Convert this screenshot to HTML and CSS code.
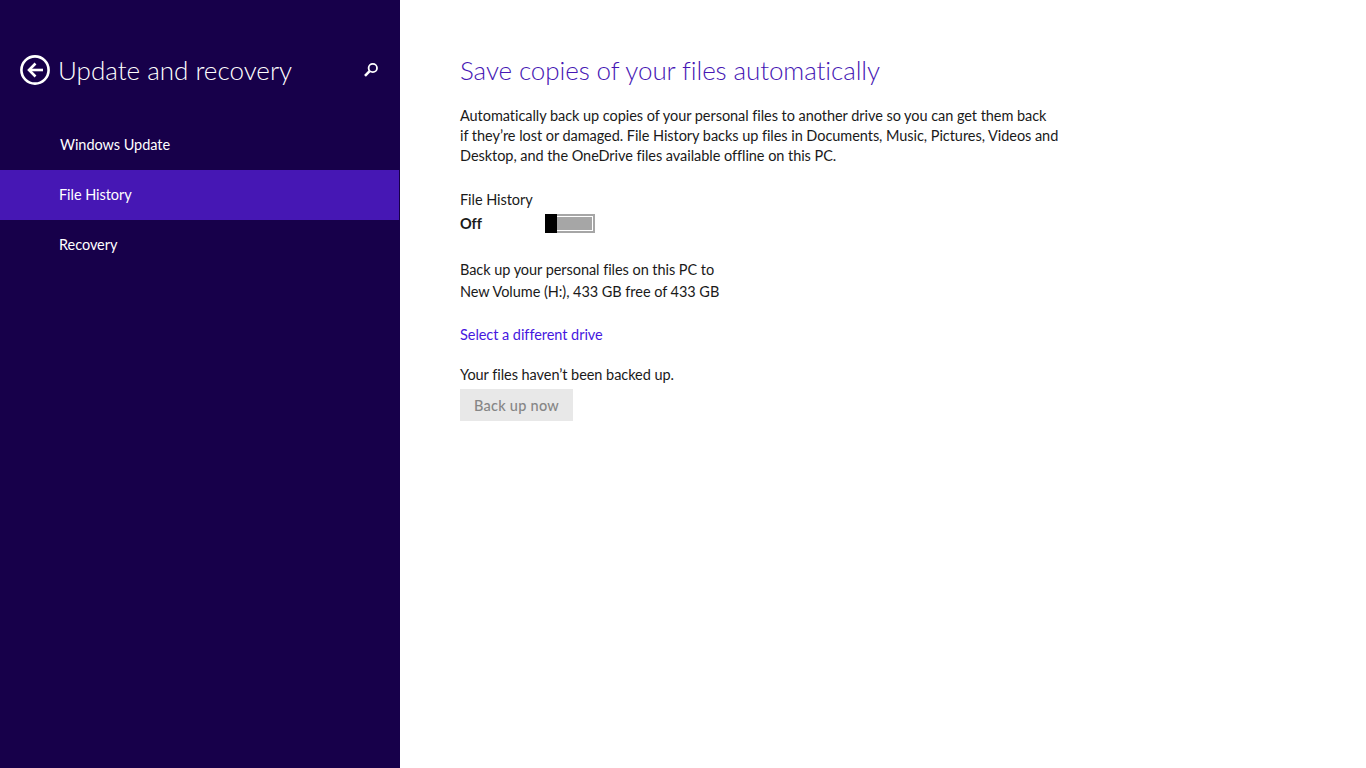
FILE: index.html
```html
<!DOCTYPE html>
<html lang="en">
<head>
    <meta charset="UTF-8">
    <meta name="viewport" content="width=device-width, initial-scale=1.0">
    <title>Update and recovery</title>
    <link rel="stylesheet" href="styles.css">
</head>
<body>
    <div class="sidebar">
        <div class="side-head">
            <svg class="back-icon" viewBox="0 0 30 30">
                <circle cx="15" cy="15" r="13.6" />
                <line x1="9" y1="15" x2="23" y2="15" />
                <polyline points="15.5,8.5 9,15 15.5,21.5" />
            </svg>
            <h1 class="side-title">Update and recovery</h1>
            <svg class="search-icon" viewBox="0 0 16 16">
                <circle cx="9.8" cy="6" r="4.2" />
                <line class="search-handle" x1="6.6" y1="9.2" x2="2" y2="13.8" />
            </svg>
        </div>
        <ul class="side-nav">
            <li class="nav-first">Windows Update</li>
            <li class="active">File History</li>
            <li>Recovery</li>
        </ul>
    </div>
    <div class="content">
        <h2 class="page-title">Save copies of your files automatically</h2>
        <p class="intro">Automatically back up copies of your personal files to another drive so you can get them back<br>if they’re lost or damaged. File History backs up files in Documents, Music, Pictures, Videos and<br>Desktop, and the OneDrive files available offline on this PC.</p>
        <div class="toggle-label">File History</div>
        <div class="toggle-row">
            <span class="toggle-state">Off</span>
            <div class="toggle"><div class="toggle-thumb"></div><div class="toggle-fill"></div></div>
        </div>
        <p class="drive-info">Back up your personal files on this PC to<br>New Volume (H:), 433 GB free of 433 GB</p>
        <a class="drive-link" href="#">Select a different drive</a>
        <p class="status">Your files haven’t been backed up.</p>
        <button class="backup-btn" disabled>Back up now</button>
    </div>
</body>
</html>
```

FILE: styles.css
```css
body {
    display: flex;
    height: 100vh;
    margin: 0;
    overflow: hidden;
    background-color: #fff;
    color: #1a1a1a;
    font-family: "Lato", "Noto Sans", sans-serif;
    font-size: 14.5px;
    letter-spacing: -0.05px;
}

.sidebar {
    width: 400px;
    flex-shrink: 0;
    background-color: #17004a;
    color: #fff;
}

.side-head {
    display: flex;
    align-items: center;
    height: 30px;
    padding: 55px 21px 0 20px;
}

.back-icon {
    width: 30px;
    height: 30px;
    fill: none;
    stroke: #fff;
    stroke-width: 2.6;
}

.side-title {
    flex: 1;
    margin: 0 0 0 8px;
    font-size: 26px;
    font-weight: 300;
    letter-spacing: 0;
    white-space: nowrap;
}

.search-icon {
    width: 16px;
    height: 16px;
    fill: none;
    stroke: #fff;
    stroke-width: 1.8;
}

.search-handle {
    stroke-width: 2.6;
}

.side-nav {
    list-style: none;
    margin: 0;
    padding: 35px 1px 0 0;
}

.side-nav li {
    height: 50px;
    line-height: 49px;
    padding-left: 59px;
}

.side-nav .nav-first {
    padding-left: 60px;
}

.side-nav .active {
    background-color: #4617b4;
}

.content {
    padding: 54px 0 0 60px;
}

.page-title {
    margin: 0;
    color: #4617b4;
    font-size: 26px;
    line-height: 32px;
    font-weight: 300;
    letter-spacing: -0.1px;
}

.intro {
    margin: 20px 0 0;
    line-height: 20px;
}

.toggle-label {
    margin-top: 24px;
    line-height: 20px;
}

.toggle-row {
    display: flex;
    align-items: center;
    height: 20px;
    margin-top: 3px;
}

.toggle-state {
    width: 85px;
    font-weight: 700;
}

.toggle {
    display: flex;
    width: 50px;
    height: 19px;
    box-sizing: border-box;
    border: 2px solid #a6a6a6;
    border-left: 0;
    background-color: #a6a6a6;
    box-shadow: inset 0 0 0 1px #fff;
}

.toggle-thumb {
    width: 12px;
    margin-top: -2px;
    margin-bottom: -2px;
    background-color: #000;
}

.toggle-fill {
    flex: 1;
}

.drive-info {
    margin: 26px 0 0;
    line-height: 22px;
}

.drive-link {
    display: block;
    margin-top: 22px;
    color: #4617e0;
    line-height: 20px;
    text-decoration: none;
}

.status {
    margin: 20px 0 0;
    line-height: 20px;
}

.backup-btn {
    display: block;
    width: 113px;
    height: 32px;
    margin-top: 4px;
    padding: 0;
    border: 0;
    background-color: #e8e8e8;
    color: #868686;
    font-family: inherit;
    font-size: 14.5px;
    font-weight: 500;
    letter-spacing: 0.25px;
}
```
